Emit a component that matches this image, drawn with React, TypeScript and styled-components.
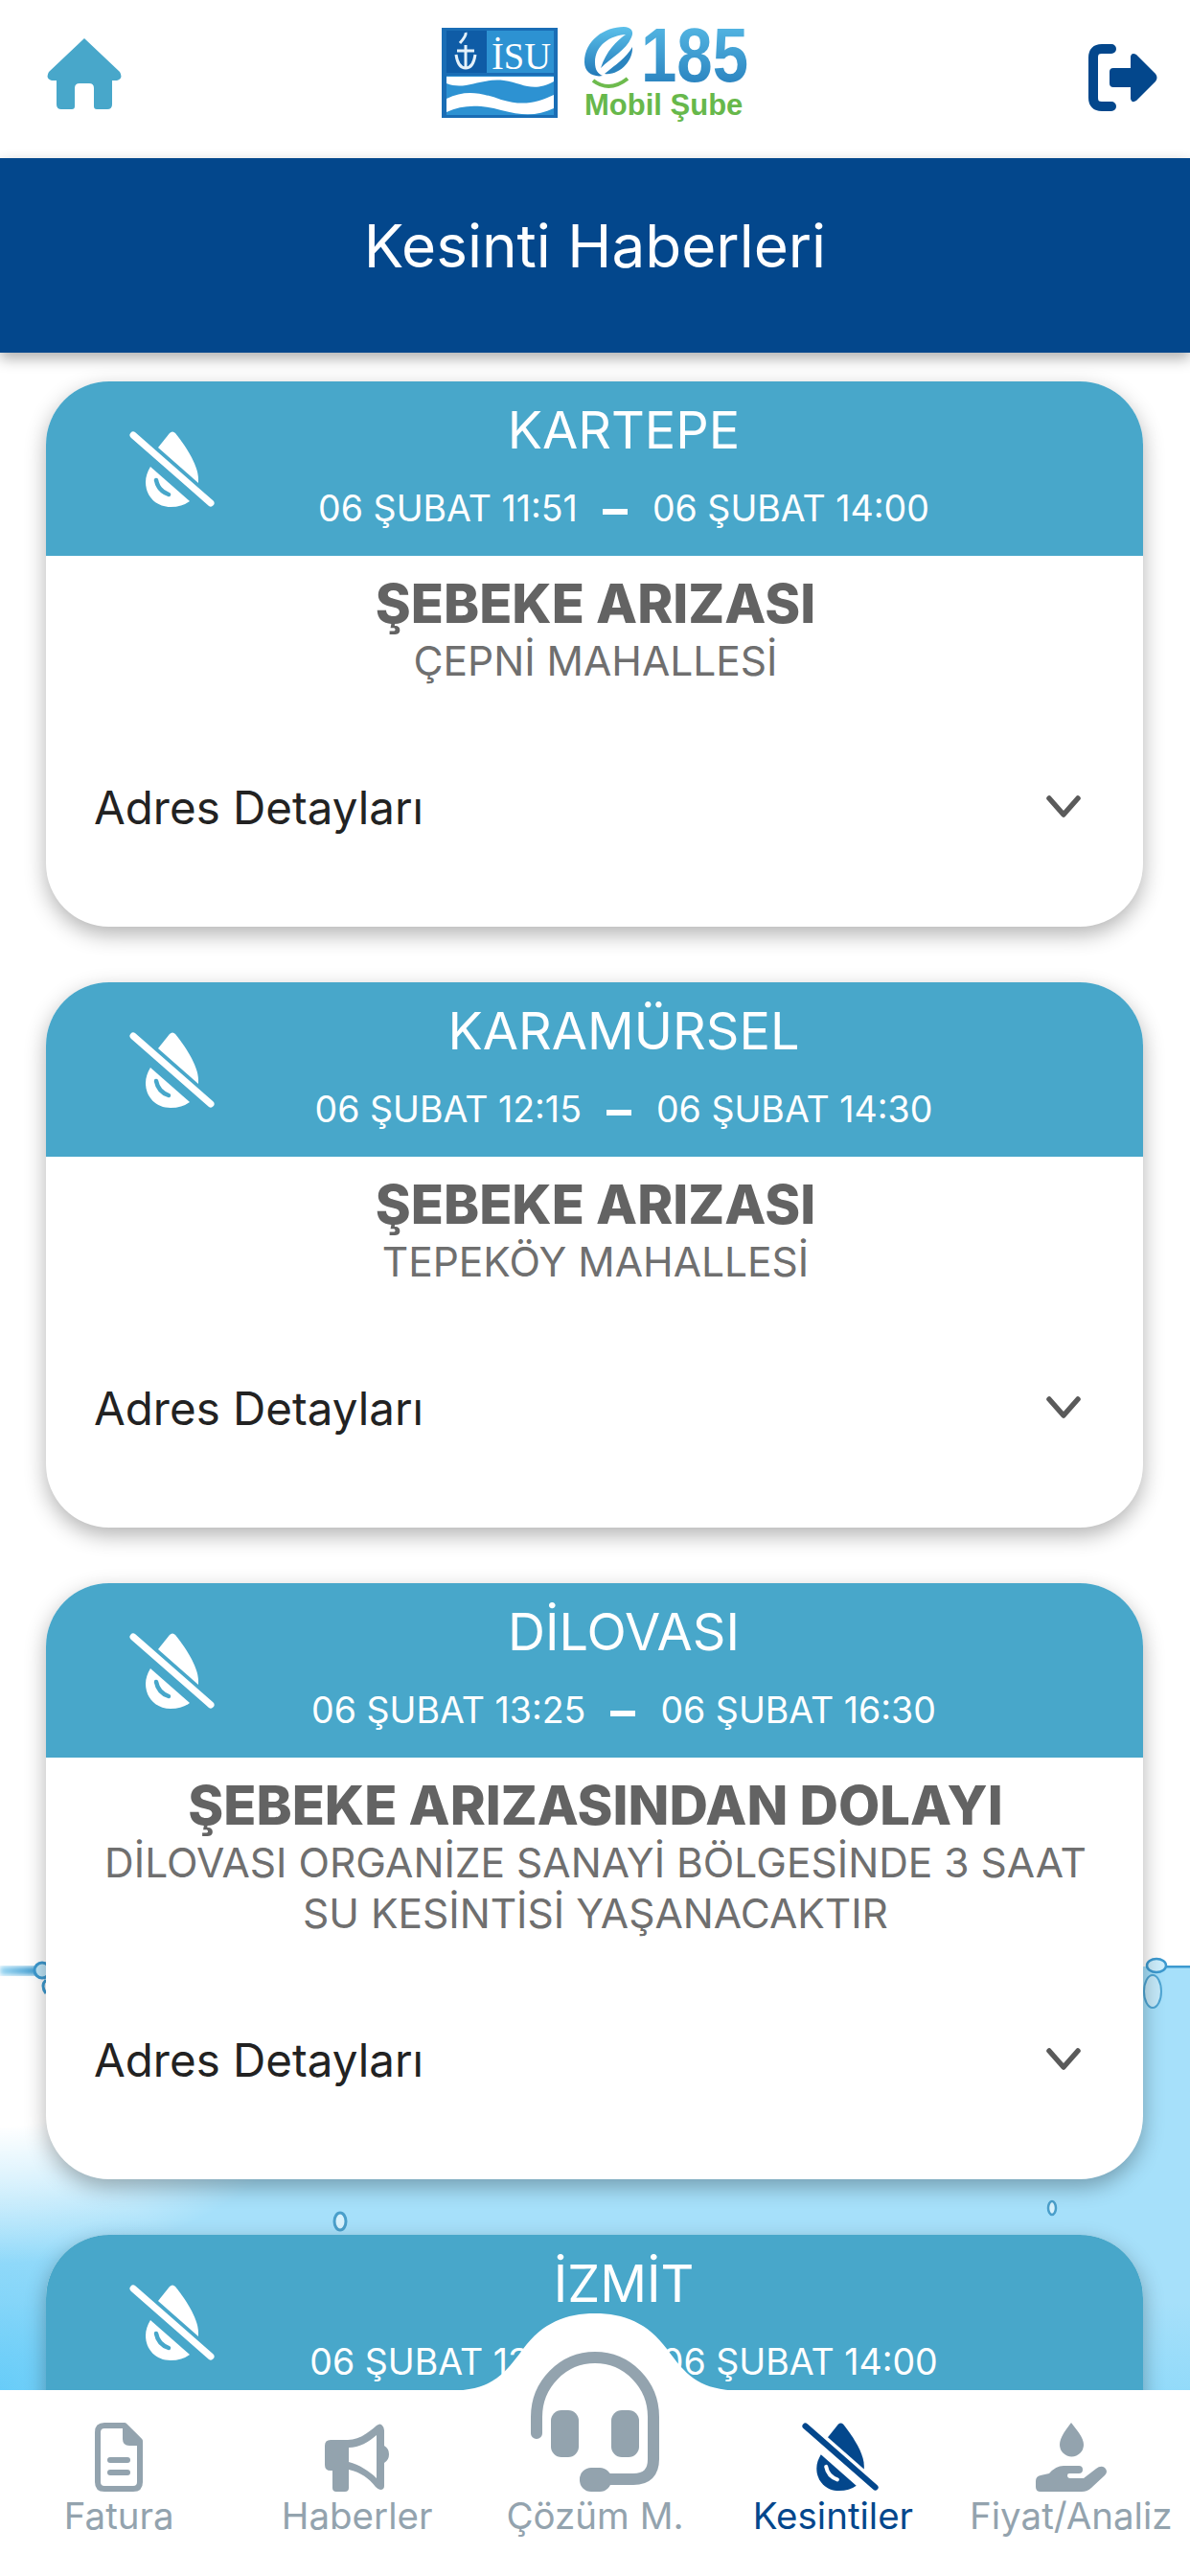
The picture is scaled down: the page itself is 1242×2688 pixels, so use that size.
import React from "react";
import styled, { createGlobalStyle } from "styled-components";

const Global = createGlobalStyle`
  html, body { margin: 0; padding: 0; background: #fff; }
  * { box-sizing: border-box; }
  body { font-family: "Inter", "Noto Sans", sans-serif; }
`;

const NAVY = "#03478c";
const TEAL = "#48a7ca";
const GREY = "#93a3ae";

const Page = styled.div`
  position: relative;
  width: 1242px;
  height: 2688px;
  overflow: hidden;
  display: flex;
  flex-direction: column;
  background: #fff;
`;
const Water = styled.div`
  position: absolute;
  left: 0;
  right: 0;
  top: 2052px;
  bottom: 0;
  background:
    radial-gradient(ellipse 340px 220px at 0 90px, #fff 35%, rgba(255, 255, 255, 0) 100%),
    radial-gradient(ellipse 260px 220px at 0 440px, rgba(90, 200, 248, 0.75) 0%, rgba(90, 200, 248, 0) 100%),
    linear-gradient(180deg, rgba(255, 255, 255, 0) 55%, rgba(100, 205, 248, 0.3) 70%),
    #a6e0fa;
`;
const Decor = styled.svg`
  position: absolute;
  left: 0;
  top: 2020px;
  width: 1242px;
  height: 320px;
`;
const TopBar = styled.header`
  position: relative;
  height: 165px;
  flex: none;
  background: #fff;
  display: flex;
  align-items: flex-start;
  justify-content: space-between;
  padding: 40px 34px 0 49px;
`;
const LogoWrap = styled.div`
  position: absolute;
  left: 461px;
  top: 27px;
`;
const LogoutWrap = styled.div`
  margin-top: 6px;
`;
const TitleBar = styled.div`
  position: relative;
  z-index: 2;
  flex: none;
  height: 203px;
  background: ${NAVY};
  box-shadow: 0 6px 14px rgba(0, 0, 0, 0.32);
  color: #fff;
  font-size: 62px;
  font-weight: 400;
  line-height: 1;
  text-align: center;
  padding-top: 61px;
`;
const Scroll = styled.main`
  position: relative;
  flex: 1;
  min-height: 0;
  padding: 30px 49px 0 48px;
  display: flex;
  flex-direction: column;
  gap: 58px;
  overflow: hidden;
`;
const Card = styled.article`
  flex: none;
  border-radius: 66px;
  background: #fff;
  box-shadow: 0 8px 22px rgba(0, 0, 0, 0.3);
  overflow: hidden;
`;
const CardHead = styled.div`
  height: 182px;
  background: ${TEAL};
  color: #fff;
  display: flex;
  align-items: flex-start;
  padding: 52px 116px 0 87px;
`;
const HeadText = styled.div`
  flex: 1;
  margin-top: -32px;
  display: flex;
  flex-direction: column;
  align-items: center;
`;
const District = styled.div`
  font-size: 54px;
  line-height: 62px;
`;
const DateRow = styled.div`
  margin-top: 29px;
  display: flex;
  align-items: center;
  gap: 26px;
  font-size: 37.5px;
  line-height: 44px;
  white-space: nowrap;
`;
const Dash = styled.span`
  width: 26px;
  height: 6px;
  background: #fff;
  margin-top: 6px;
`;
const CardBody = styled.div`
  padding: 20px 48px 75px 50px;
  text-align: center;
`;
const Cause = styled.div`
  color: #636363;
  font-size: 56px;
  font-weight: 800;
  line-height: 60px;
  white-space: nowrap;
`;
const Place = styled.div`
  margin-top: 3px;
  color: #6f6f6f;
  font-size: 42.5px;
  line-height: 53px;
  white-space: nowrap;
`;
const Details = styled.div`
  margin-top: 76px;
  height: 100px;
  display: flex;
  align-items: center;
  justify-content: space-between;
  color: #222;
  font-size: 47.5px;
  text-align: left;
`;
const Chevron = styled.svg`
  width: 36px;
  height: 24px;
  margin-right: 17px;
`;
const TabBar = styled.nav`
  position: absolute;
  left: 0;
  right: 0;
  bottom: 0;
  height: 194px;
  background: #fff;
  display: grid;
  grid-template-columns: repeat(5, 1fr);
  grid-template-rows: 155px;
  align-items: end;
  padding-bottom: 39px;
`;
const Bump = styled.svg`
  position: absolute;
  left: 461px;
  top: -80px;
  width: 320px;
  height: 81px;
`;
const Tab = styled.div<{ $active?: boolean }>`
  position: relative;
  display: flex;
  flex-direction: column;
  align-items: center;
  gap: 1px;
  color: ${(p) => (p.$active ? NAVY : GREY)};
  font-size: 38.5px;
  line-height: 48px;
  white-space: nowrap;
`;
const ShiftedGlyph = styled.div`
  display: flex;
  margin-left: 16px;
`;

function DropOff({ w, h, color, cut }: { w: number; h: number; color: string; cut: string }) {
  return (
    <svg width={w} height={h} viewBox="0 0 90 80" preserveAspectRatio="none">
      <path fill={color} d="M30 17 L42 2 Q45 -1 48 2 C56 12 72 34 72 50 L72 54 Z" />
      <path fill={color} d="M22 37 L63 73 Q55 79 43 79 C28 79 17 68 17 53 C17 47 19 42 22 37Z" />
      <path fill="none" stroke={color} strokeWidth="7" strokeLinecap="round" d="M4 4 L85 75" />
      <path fill="none" stroke={cut} strokeWidth="4.5" strokeLinecap="round" d="M28 51 Q30 62 41 66" />
    </svg>
  );
}

function Home() {
  return (
    <svg width="78" height="74" viewBox="0 0 78 74">
      <path
        fill={TEAL}
        d="M39 0 L76 35 Q80 42 73 44 H68 V69 Q68 74 63 74 H52 Q49 74 49 71 V52 Q49 47 44 47 H34 Q29 47 29 52 V71 Q29 74 26 74 H15 Q10 74 10 69 V44 H5 Q-2 42 2 35 Z"
      />
    </svg>
  );
}

function Logout() {
  return (
    <svg width="74" height="70" viewBox="0 0 74 70">
      <path fill="none" stroke={NAVY} strokeWidth="10" strokeLinecap="round" d="M26 5 H16 Q7 5 7 14 V56 Q7 65 16 65 H26" />
      <path fill={NAVY} d="M28 25 H46 V13 Q47 8 52 11 L72 31 Q75 35 72 39 L52 59 Q47 62 46 57 V45 H28 Q24 45 24 41 V29 Q24 25 28 25Z" />
    </svg>
  );
}

function Logo() {
  return (
    <svg width="330" height="104" viewBox="0 0 330 104">
      <defs>
        <linearGradient id="blue185" x1="0" y1="0" x2="0" y2="1">
          <stop offset="0" stopColor="#5cc0ea" />
          <stop offset="1" stopColor="#2279b8" />
        </linearGradient>
      </defs>
      <rect x="0" y="2" width="121" height="94" fill="#1a6db5" />
      <rect x="47" y="5" width="70" height="44" fill="#2d92d2" />
      <rect x="5" y="5" width="42" height="44" fill="#0f5ca6" />
      <path fill="none" stroke="#e4f1fa" strokeWidth="3" d="M19 18 Q26 10 25 7 M16 26 H34 M25 20 V44 M15 30 Q17 44 25 44 Q33 44 35 30" />
      <text x="52" y="45" fontFamily="'Liberation Serif', serif" fontSize="40" textLength="62" lengthAdjust="spacingAndGlyphs" fill="#fff">İSU</text>
      <rect x="5" y="52" width="112" height="41" fill="#2d92d2" />
      <path fill="#fff" d="M5 53 H117 V58 C95 70 85 60 65 57 C40 54 25 68 5 60 Z" />
      <path fill="#fff" d="M5 76 C25 66 42 70 62 77 C85 84 100 80 117 72 V86 C100 94 85 94 62 88 C40 82 22 82 5 90 Z" />
      <path fill="url(#blue185)" d="M149 38 C149 15 170 1 190 1 C198 1 201 6 198 12 C192 26 178 32 166 44 C172 26 182 16 192 9 C176 10 160 20 160 38 C160 46 163 50 168 52 C158 54 149 48 149 38Z" />
      <path fill="#2a84bf" d="M170 50 C182 40 192 34 199 22 C200 36 186 52 170 50Z" />
      <path fill="none" stroke="#6dbb4d" strokeWidth="4" d="M158 57 Q175 70 194 55" />
      <text x="208" y="58" fontFamily="'Liberation Sans', sans-serif" fontWeight="700" fontSize="80" textLength="112" lengthAdjust="spacingAndGlyphs" fill="url(#blue185)">185</text>
      <text x="149" y="93" fontFamily="'Liberation Sans', sans-serif" fontWeight="700" fontSize="31" fill="#67b84b">Mobil Şube</text>
    </svg>
  );
}

function FileIcon() {
  return (
    <svg width="50" height="72" viewBox="0 0 50 72">
      <path fill="none" stroke={GREY} strokeWidth="6" strokeLinejoin="round" d="M10 3 H31 L47 19 V62 Q47 69 40 69 H10 Q3 69 3 62 V10 Q3 3 10 3Z" />
      <path fill={GREY} d="M29 3 L47 20 V24 H36 Q29 24 29 17Z" />
      <rect x="13" y="36" width="24" height="6" rx="3" fill={GREY} />
      <rect x="13" y="49" width="24" height="6" rx="3" fill={GREY} />
    </svg>
  );
}

function HornIcon() {
  return (
    <svg width="67" height="72" viewBox="0 0 67 72">
      <path
        fill={GREY}
        fillRule="evenodd"
        d="M6 18 H24 C36 18 46 10 54 3 Q58 0 60 3 Q62 5 62 8 V24 Q67 27 67 33 Q67 39 62 42 V66 Q62 70 58 70 Q56 70 53 67 C46 58 38 52 25 49 V68 Q25 72 21 72 H12 Q8 72 8 68 V50 H6 Q0 50 0 44 V24 Q0 18 6 18 Z M25 26 C36 26 46 20 54 13 V58 C46 50 36 44 25 41 Z"
      />
    </svg>
  );
}

function HeadsetIcon() {
  return (
    <svg width="136" height="146" viewBox="0 0 136 146">
      <path fill="none" stroke={GREY} strokeWidth="12" strokeLinecap="round" d="M7 85 V68 A61 62 0 0 1 129 68 V112 Q129 133 108 133 H80" />
      <rect x="22" y="61" width="29" height="49" rx="11" fill={GREY} />
      <rect x="85" y="61" width="29" height="49" rx="11" fill={GREY} />
      <rect x="52" y="121" width="33" height="25" rx="12" fill={GREY} />
    </svg>
  );
}

function HandIcon() {
  return (
    <svg width="74" height="72" viewBox="0 0 74 72">
      <path fill={GREY} d="M37 0 C42 7 50 15 50 23 A12.5 12.5 0 0 1 25 23 C25 15 32 7 37 0Z" />
      <path fill={GREY} d="M0 61 Q0 56 5 55 L14 53 Q21 45 29 45 H45 Q49 45 49 49 Q49 53 45 53 H35 Q33 53 33 55 Q33 58 36 58 H50 L63 48 Q68 44 72 47 Q76 51 72 55 L58 68 Q54 72 48 72 H5 Q0 72 0 67Z" />
    </svg>
  );
}

type Outage = { city: string; from: string; to: string; cause?: string; place?: string[] };

const cards: Outage[] = [
  { city: "KARTEPE", from: "06 ŞUBAT 11:51", to: "06 ŞUBAT 14:00", cause: "ŞEBEKE ARIZASI", place: ["ÇEPNİ MAHALLESİ"] },
  { city: "KARAMÜRSEL", from: "06 ŞUBAT 12:15", to: "06 ŞUBAT 14:30", cause: "ŞEBEKE ARIZASI", place: ["TEPEKÖY MAHALLESİ"] },
  {
    city: "DİLOVASI",
    from: "06 ŞUBAT 13:25",
    to: "06 ŞUBAT 16:30",
    cause: "ŞEBEKE ARIZASINDAN DOLAYI",
    place: ["DİLOVASI ORGANİZE SANAYİ BÖLGESİNDE 3 SAAT", "SU KESİNTİSİ YAŞANACAKTIR"],
  },
  { city: "İZMİT", from: "06 ŞUBAT 13:40", to: "06 ŞUBAT 14:00" },
];

export default function App() {
  return (
    <Page>
      <Global />
      <Water />
      <Decor viewBox="0 0 1242 320" aria-hidden>
        <defs>
          <linearGradient id="streak" x1="0" y1="0" x2="1" y2="0">
            <stop offset="0" stopColor="#9ad6f2" />
            <stop offset="1" stopColor="#2b8fc9" />
          </linearGradient>
          <filter id="soft">
            <feGaussianBlur stdDeviation="2.5" />
          </filter>
        </defs>
        <rect x="0" y="32" width="44" height="9" fill="url(#streak)" filter="url(#soft)" />
        <circle cx="44" cy="36" r="8" fill="#bfe6f8" stroke="#3d9ad0" strokeWidth="3" />
        <path d="M48 46 Q42 52 48 60" fill="none" stroke="#3d9ad0" strokeWidth="3" />
        <rect x="1196" y="31" width="46" height="2.5" fill="#3d9ad0" />
        <ellipse cx="1207" cy="31" rx="10" ry="7" fill="#cdeefc" stroke="#3d9ad0" strokeWidth="2.5" />
        <ellipse cx="1203" cy="58" rx="9" ry="17" fill="#c4e9f9" stroke="#4fa6d4" strokeWidth="2" />
        <ellipse cx="355" cy="298" rx="6" ry="9" fill="#d8f2fd" stroke="#4a9fcb" strokeWidth="3" />
        <ellipse cx="1098" cy="284" rx="4" ry="7" fill="#d8f2fd" stroke="#4a9fcb" strokeWidth="2.5" />
      </Decor>
      <TopBar>
        <Home />
        <LogoWrap>
          <Logo />
        </LogoWrap>
        <LogoutWrap>
          <Logout />
        </LogoutWrap>
      </TopBar>
      <TitleBar>Kesinti Haberleri</TitleBar>
      <Scroll>
        {cards.map((c) => (
          <Card key={c.city}>
            <CardHead>
              <DropOff w={90} h={80} color="#fff" cut={TEAL} />
              <HeadText>
                <District>{c.city}</District>
                <DateRow>
                  <span>{c.from}</span>
                  <Dash />
                  <span>{c.to}</span>
                </DateRow>
              </HeadText>
            </CardHead>
            <CardBody>
              {c.cause && <Cause>{c.cause}</Cause>}
              {c.place && (
                <Place>
                  {c.place.map((l) => (
                    <div key={l}>{l}</div>
                  ))}
                </Place>
              )}
              {c.cause && (
                <Details>
                  <span>Adres Detayları</span>
                  <Chevron viewBox="0 0 36 24">
                    <path d="M3 3 L18 20 L33 3" fill="none" stroke="#5a5a5a" strokeWidth="5.5" strokeLinecap="round" strokeLinejoin="round" />
                  </Chevron>
                </Details>
              )}
            </CardBody>
          </Card>
        ))}
      </Scroll>
      <TabBar>
        <Bump viewBox="0 0 320 83" preserveAspectRatio="none">
          <path fill="#fff" d="M0 83 C50 83 62 70 85 38 C105 10 130 0 160 0 C190 0 215 10 235 38 C258 70 270 83 320 83 Z" />
        </Bump>
        <Tab>
          <FileIcon />
          Fatura
        </Tab>
        <Tab>
          <HornIcon />
          Haberler
        </Tab>
        <Tab>
          <HeadsetIcon />
          Çözüm M.
        </Tab>
        <Tab $active>
          <ShiftedGlyph>
            <DropOff w={81} h={72} color={NAVY} cut="#fff" />
          </ShiftedGlyph>
          Kesintiler
        </Tab>
        <Tab>
          <HandIcon />
          Fiyat/Analiz
        </Tab>
      </TabBar>
    </Page>
  );
}
